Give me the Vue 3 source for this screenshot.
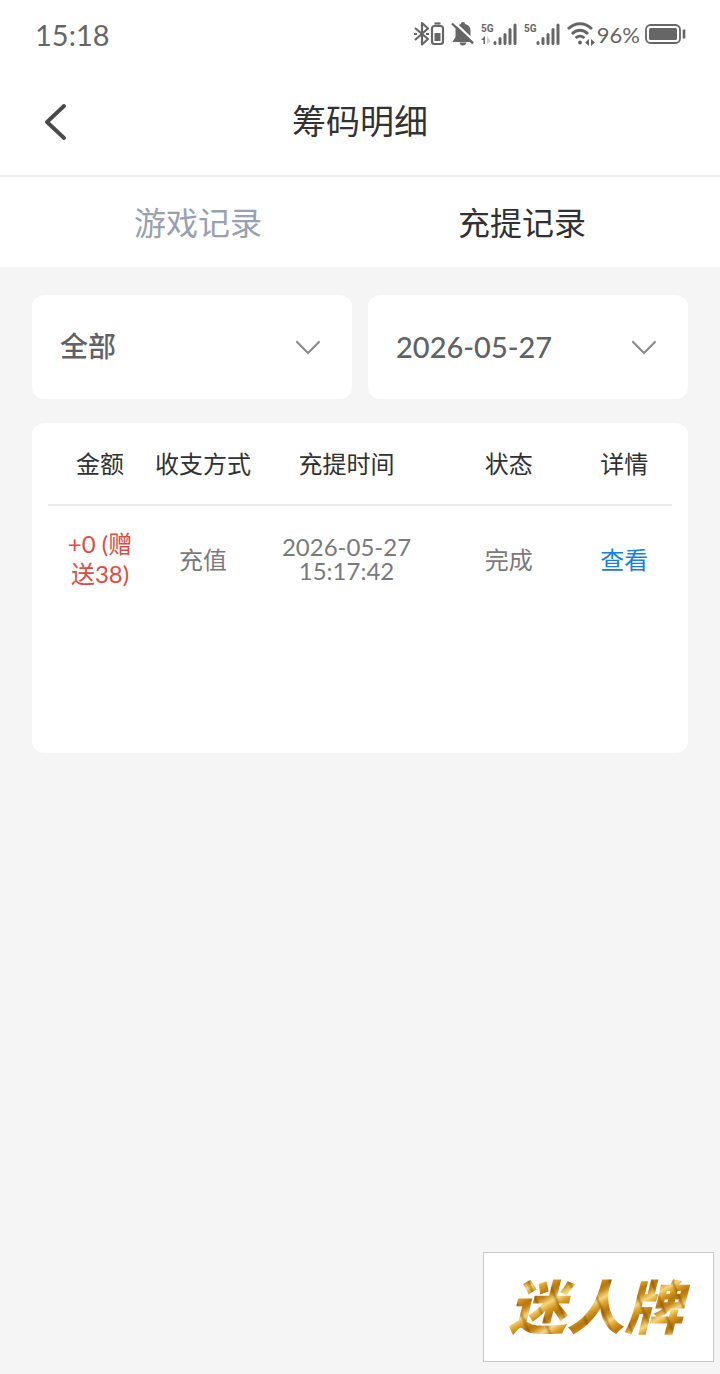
<template>
  <div class="page">
    <div class="status">
      <span class="status__time">15:18</span>
      <div class="status__icons">
        <svg width="34" height="28" viewBox="0 0 34 28" fill="none" stroke="#666" stroke-width="2.2">
          <path d="M2 8l13 11-6 5.5V3l6 5.5L2 20" stroke-linejoin="round" />
          <path d="M1 14h3M13 14h3" />
          <rect x="19" y="6" width="11" height="18" rx="2.5" />
          <path d="M21.5 3.500h6" />
          <path d="M24.5 13v8" stroke-width="6" />
        </svg>
        <svg class="status__bell" width="24" height="28" viewBox="0 0 24 28">
          <path d="M12 2c1.5 0 2 .8 2 2 4 1 5.5 3.6 5.5 7v6l3 5h-21l3-5v-6c0-3.4 1.500-6 5.500-7 0-1.2.5-2 2-2z" fill="#666" />
          <path d="M8.5 22.5h7c-.5 2-1.600 3-3.500 3s-3-1-3.500-3z" fill="#666" />
          <path d="M3 2l20 19" stroke="#fff" stroke-width="2.4" />
          <path d="M1 3.500l21 20" stroke="#666" stroke-width="2.4" />
        </svg>
        <svg v-for="sim in sims" :key="sim.id" class="status__sim" width="38" height="28" viewBox="0 0 38 28">
          <text x="0" y="12" class="status__net">5G</text>
          <template v-if="sim.data">
            <path d="M0 20l4-4v8H2.500v-4z" fill="#666" />
            <path d="M6 16l3.5 5L6 24z" fill="#ccc" />
          </template>
          <path
            d="M14 22.5v1M19 18.5v5M24 14.5v9M29 9.5v14M34 5v18.5"
            stroke="#666"
            stroke-width="3"
            stroke-linecap="round"
          />
        </svg>
        <svg class="status__wifi" width="28" height="28" viewBox="0 0 28 28" fill="none" stroke="#666" stroke-width="2.8">
          <path d="M1 9C8 2 18 2 25 9M5 14C10 9 16 9 21 14M8.5 18C11.5 15.5 14.5 15.5 17.5 18" />
          <circle cx="13" cy="22.5" r="2" fill="#666" stroke="none" />
          <path d="M18 22.5l4-3.500v7zM28 22.5l-4-3.500v7z" fill="#666" stroke="none" />
        </svg>
        <span class="status__percent">96%</span>
        <svg width="42" height="28" viewBox="0 0 42 28">
          <rect x="2" y="5" width="34" height="18" rx="4.5" fill="none" stroke="#666" stroke-width="1.8" />
          <rect x="5" y="8" width="28" height="12" rx="1.5" fill="#666" />
          <path d="M40 9.5v9" stroke="#666" stroke-width="2.6" />
        </svg>
      </div>
    </div>

    <header class="nav">
      <button class="nav__back" type="button" aria-label="返回">
        <svg width="24" height="36" viewBox="0 0 24 36" fill="none">
          <path d="M20 2L3 18l17 16" stroke="#4a4a4a" stroke-width="3.8" stroke-linecap="round" stroke-linejoin="round" />
        </svg>
      </button>
      <h1 class="nav__title">筹码明细</h1>
    </header>

    <nav class="tabs">
      <button
        v-for="tab in tabs"
        :key="tab.key"
        type="button"
        class="tabs__item"
        :class="{ 'is-active': tab.key === activeTab }"
        @click="activeTab = tab.key"
      >
        {{ tab.label }}
      </button>
    </nav>

    <main class="content">
      <div class="filters">
        <div v-for="filter in filters" :key="filter.key" class="filter">
          <select
            v-model="filter.value"
            class="filter__select"
            :class="`filter__select--${filter.key}`"
            :aria-label="filter.name"
          >
            <option v-for="option in filter.options" :key="option">{{ option }}</option>
          </select>
          <svg class="filter__arrow" width="26" height="16" viewBox="0 0 26 16" fill="none">
            <path d="M2 2l11 11L24 2" stroke="#8c8c8c" stroke-width="2.2" stroke-linecap="round" />
          </svg>
        </div>
      </div>

      <section class="card">
        <table class="records">
          <thead>
            <tr>
              <th v-for="col in columns" :key="col.key" :class="`col-${col.key}`">{{ col.label }}</th>
            </tr>
          </thead>
          <tbody>
            <tr v-for="row in rows" :key="row.time">
              <td class="records__amount">{{ row.amount }}</td>
              <td>{{ row.method }}</td>
              <td class="records__time">{{ row.date }} {{ row.time }}</td>
              <td>{{ row.status }}</td>
              <td><a class="records__link" href="#">查看</a></td>
            </tr>
          </tbody>
        </table>
      </section>
    </main>

    <div class="brand">
      <span class="brand__text">迷人牌</span>
    </div>
  </div>
</template>

<script setup>
import { reactive, ref } from 'vue'

const sims = [
  { id: 1, data: true },
  { id: 2, data: false },
]

const tabs = [
  { key: 'game', label: '游戏记录' },
  { key: 'wallet', label: '充提记录' },
]
const activeTab = ref('wallet')

const filters = reactive([
  { key: 'type', name: '类型', value: '全部', options: ['全部'] },
  { key: 'date', name: '日期', value: '2026-05-27', options: ['2026-05-27'] },
])

const columns = [
  { key: 'amount', label: '金额' },
  { key: 'method', label: '收支方式' },
  { key: 'time', label: '充提时间' },
  { key: 'status', label: '状态' },
  { key: 'detail', label: '详情' },
]

const rows = [
  { amount: '+0 (赠送38)', method: '充值', date: '2026-05-27', time: '15:17:42', status: '完成' },
]
</script>

<style>
body {
  margin: 0;
  background: #f5f5f5;
}
</style>

<style scoped>
.page {
  min-height: 100vh;
  background: #f5f5f5;
  font-family: Lato, 'Noto Sans CJK SC', sans-serif;
  color: #333;
}

.page * {
  box-sizing: border-box;
}

button,
select {
  border: 0;
  padding: 0;
  background: none;
  font-family: inherit;
}

.status {
  display: flex;
  align-items: center;
  justify-content: space-between;
  height: 68px;
  padding: 0 34px 0 35px;
  background: #fff;
  color: #666;
}

.status__time {
  font-size: 29px;
}

.status__icons {
  display: flex;
  align-items: center;
}

.status__bell {
  margin: 0 6px 0 4px;
}

.status__sim {
  margin-right: 5px;
}

.status__net {
  font-family: Roboto, sans-serif;
  font-size: 10px;
  font-weight: 700;
  fill: #666;
}

.status__percent {
  margin: 0 4px 0 2px;
  font-size: 22px;
}

.nav {
  position: relative;
  display: flex;
  align-items: center;
  justify-content: center;
  height: 109px;
  border-bottom: 2px solid #f0f0f0;
  background: #fff;
}

.nav__back {
  position: absolute;
  left: 44px;
  display: flex;
}

.nav__title {
  margin: 0;
  padding-bottom: 4px;
  font-size: 34px;
  font-weight: 400;
}

.tabs {
  display: flex;
  height: 90px;
  padding: 0 36px;
  background: #fff;
}

.tabs__item {
  flex: 1;
  padding-bottom: 2px;
  font-size: 32px;
  color: #98a1b2;
}

.tabs__item.is-active {
  color: #303133;
}

.content {
  padding: 28px 32px;
}

.filters {
  display: grid;
  grid-template-columns: 1fr 1fr;
  gap: 16px;
  margin-bottom: 24px;
}

.filter {
  position: relative;
  height: 104px;
  border-radius: 12px;
  background: #fff;
}

.filter__select {
  width: 100%;
  height: 100%;
  padding: 0 64px 2px 28px;
  appearance: none;
  font-size: 28px;
  font-weight: 500;
  color: #606266;
}

.filter__select--date {
  font-size: 29px;
}

.filter__arrow {
  position: absolute;
  top: 45px;
  right: 31px;
  pointer-events: none;
}

.card {
  min-height: 330px;
  padding: 0 16px;
  border-radius: 12px;
  background: #fff;
}

.records {
  width: 100%;
  table-layout: fixed;
  border-collapse: collapse;
  font-size: 24px;
  text-align: center;
}

.records th {
  height: 82px;
  padding: 0 2px 2px 0;
  border-bottom: 2px solid #ebebeb;
  font-weight: 400;
  color: #303133;
}

.records td {
  height: 108px;
  padding: 0 2px 2px 0;
  color: #7a7a7a;
}

.col-amount {
  width: 17%;
}

.col-method {
  width: 16%;
}

.col-time {
  width: 30%;
}

.col-status {
  width: 22%;
}

.col-detail {
  width: 15%;
}

.records .records__amount {
  padding: 0 18px 2px 16px;
  line-height: 30px;
  color: #e04b45;
}

.records .records__time {
  padding: 0 26px 2px 24px;
  line-height: 24px;
}

.records__link {
  color: #1680dc;
  text-decoration: none;
}

.brand {
  position: fixed;
  right: 6px;
  bottom: 12px;
  display: flex;
  align-items: center;
  justify-content: center;
  width: 231px;
  height: 110px;
  border: 1px solid #c8c8c8;
  background: #fff;
}

.brand__text {
  padding: 0 10px 0 4px;
  background:
    repeating-linear-gradient(67deg, transparent 0 7px, rgba(112, 62, 0, 0.4) 10px, transparent 12px 19px),
    repeating-linear-gradient(150deg, #c4851a 0, #f6d67c 7px, #d99c26 13px, #b9780f 19px, #c4851a 23px);
  background-clip: text;
  -webkit-background-clip: text;
  font-size: 58px;
  font-style: italic;
  font-weight: 900;
  line-height: 80px;
  color: transparent;
}
</style>
